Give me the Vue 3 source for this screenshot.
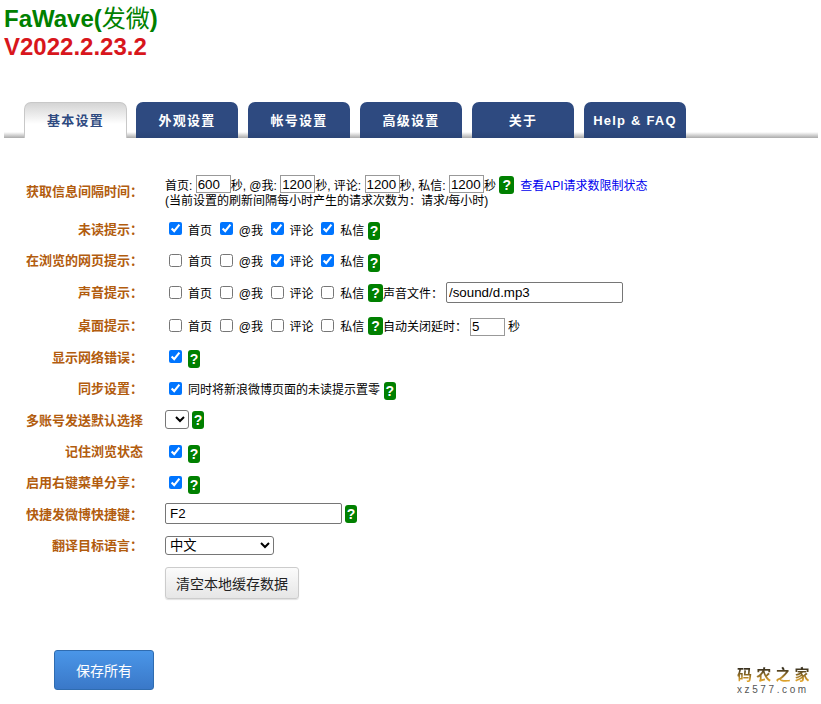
<script setup>
const tabs = ['基本设置', '外观设置', '帐号设置', '高级设置', '关于', 'Help & FAQ'];

const unread = [
  { name: '首页', on: true },
  { name: '@我', on: true },
  { name: '评论', on: true },
  { name: '私信', on: true }
];
const browsing = [
  { name: '首页', on: false },
  { name: '@我', on: false },
  { name: '评论', on: true },
  { name: '私信', on: true }
];
const none = [
  { name: '首页', on: false },
  { name: '@我', on: false },
  { name: '评论', on: false },
  { name: '私信', on: false }
];
</script>

<template>
  <main class="page">
    <h2 class="title">FaWave(<span class="thin">发微</span>)</h2>
    <h2 class="version">V2022.2.23.2</h2>

    <nav class="tabs">
      <a v-for="(tab, i) in tabs" :key="tab" :class="['tab', { active: i === 0 }]">{{ tab }}</a>
    </nav>

    <form class="settings" @submit.prevent>
      <div class="row first">
        <label class="name">获取信息间隔时间：</label>
        <div class="first-cell">
          <div class="line">首页: <input class="num" value="600" />秒, @我: <input class="num" value="1200" />秒, 评论: <input class="num" value="1200" />秒, 私信: <input class="num" value="1200" />秒 <span class="help wide">?</span><a class="api">查看API请求数限制状态</a></div>
          <div class="note">(当前设置的刷新间隔每小时产生的请求次数为：请求/每小时)</div>
        </div>
      </div>

      <div class="row">
        <label class="name">未读提示：</label>
        <div class="cell">
          <label v-for="c in unread" :key="c.name" class="check"><input type="checkbox" :checked="c.on" />{{ c.name }}</label>
          <span class="help">?</span>
        </div>
      </div>

      <div class="row">
        <label class="name">在浏览的网页提示：</label>
        <div class="cell">
          <label v-for="c in browsing" :key="c.name" class="check"><input type="checkbox" :checked="c.on" />{{ c.name }}</label>
          <span class="help">?</span>
        </div>
      </div>

      <div class="row tall">
        <label class="name">声音提示：</label>
        <div class="cell">
          <label v-for="c in none" :key="c.name" class="check"><input type="checkbox" :checked="c.on" />{{ c.name }}</label>
          <span class="help wide">?</span>
          <span class="extra">声音文件：</span>
          <input class="text sound" value="/sound/d.mp3" />
        </div>
      </div>

      <div class="row">
        <label class="name">桌面提示：</label>
        <div class="cell">
          <label v-for="c in none" :key="c.name" class="check"><input type="checkbox" :checked="c.on" />{{ c.name }}</label>
          <span class="help wide">?</span>
          <span class="extra">自动关闭延时：</span>
          <input class="num delay" value="5" />
          <span class="sec">秒</span>
        </div>
      </div>

      <div class="row">
        <label class="name">显示网络错误：</label>
        <div class="cell">
          <input class="solo" type="checkbox" checked />
          <span class="help">?</span>
        </div>
      </div>

      <div class="row">
        <label class="name">同步设置：</label>
        <div class="cell">
          <label class="check"><input type="checkbox" checked />同时将新浪微博页面的未读提示置零</label>
          <span class="help">?</span>
        </div>
      </div>

      <div class="row">
        <label class="name">多账号发送默认选择</label>
        <div class="cell">
          <select class="select empty"></select>
          <span class="help after-select">?</span>
        </div>
      </div>

      <div class="row">
        <label class="name">记住浏览状态</label>
        <div class="cell">
          <input class="solo" type="checkbox" checked />
          <span class="help">?</span>
        </div>
      </div>

      <div class="row">
        <label class="name">启用右键菜单分享：</label>
        <div class="cell">
          <input class="solo" type="checkbox" checked />
          <span class="help">?</span>
        </div>
      </div>

      <div class="row">
        <label class="name">快捷发微博快捷键：</label>
        <div class="cell">
          <input class="text shortcut" value="F2" />
          <span class="help after-input">?</span>
        </div>
      </div>

      <div class="row">
        <label class="name">翻译目标语言：</label>
        <div class="cell">
          <select class="select lang"><option>中文</option></select>
        </div>
      </div>

      <div class="row clear-row">
        <span class="name"></span>
        <div class="cell">
          <button type="button" class="clear">清空本地缓存数据</button>
        </div>
      </div>

      <button type="button" class="save">保存所有</button>
    </form>

    <div class="mark">
      <div class="mark-name">码农之家</div>
      <div class="mark-url">xz577.com</div>
    </div>
  </main>
</template>

<style scoped>
.page {
  position: relative;
  height: 704px;
  overflow: hidden;
  color: #000;
  background: #fff;
  font: 12px/15px "Liberation Sans", "Noto Sans CJK SC", sans-serif;
}

.title,
.version {
  margin: 0;
  padding-left: 4px;
  font-size: 24px;
  line-height: 29px;
  font-weight: bold;
}

.title {
  padding-top: 4px;
  color: #008000;
}

.thin {
  font-weight: normal;
}

.version {
  height: 28px;
  line-height: 27px;
  color: #d8161c;
}

.tabs {
  display: flex;
  gap: 10px;
  height: 36px;
  margin: 41px 3px 0 4px;
  padding-left: 20px;
  background: linear-gradient(to bottom, #fff 0, #fff 30px, #aaa 36px);
}

.tab {
  width: 102px;
  border-radius: 7px 7px 0 0;
  background: linear-gradient(to bottom, #2e4a80 80%, #2a4476 100%);
  color: #fff;
  font-size: 13px;
  line-height: 37px;
  font-weight: bold;
  letter-spacing: 1.2px;
  text-align: center;
}

.tab.active {
  box-sizing: border-box;
  width: 103px;
  margin-right: -1px;
  border: 1px solid #c8c8c8;
  border-bottom: 0;
  background: linear-gradient(to bottom, #d4d4d4, #fff 60%);
  color: #2e4a80;
  line-height: 36px;
}

.settings {
  padding-top: 37px;
}

.row {
  display: flex;
  align-items: center;
  height: 31.4px;
}

.row.tall {
  margin: 1px 0 1.6px;
}

.row.first {
  height: 38px;
  align-items: flex-start;
}

.row.clear-row {
  height: 44px;
}

.name {
  flex: none;
  width: 143px;
  margin-right: 22px;
  padding-top: 1px;
  color: #b25c0e;
  font-size: 13px;
  font-weight: bold;
  text-align: right;
}

.first .name {
  padding-top: 9px;
}

.line {
  white-space: nowrap;
  height: 18px;
  line-height: 23px;
}

.note {
  margin-top: 1px;
  line-height: 15px;
}

.cell {
  display: flex;
  align-items: center;
  white-space: nowrap;
}

.check {
  display: flex;
  align-items: center;
  margin-right: 3.7px;
  padding-top: 5px;
}

.check input {
  width: 13px;
  height: 13px;
  margin: 0 6px 5px 4px;
}

.solo {
  width: 13px;
  height: 13px;
  margin: 0 6px 0 4px;
}

.help {
  display: inline-block;
  flex: none;
  width: 12px;
  height: 18px;
  border-radius: 3px;
  background: #008000;
  color: #fff;
  font-size: 14px;
  line-height: 18px;
  font-weight: bold;
  text-align: center;
  vertical-align: top;
}

.help.wide {
  width: 15px;
}

.line .help {
  margin-top: 1px;
}

.cell .help {
  margin-top: 5px;
}

.cell .help.wide {
  margin-top: 1px;
}

.after-select {
  margin-left: 3px;
  margin-top: 1px !important;
}

.after-input {
  margin-left: 3px;
  margin-top: 0 !important;
}

.num {
  box-sizing: border-box;
  width: 35px;
  height: 18px;
  padding: 0 1px;
  border: 1px solid #999;
  border-radius: 0;
  outline: none;
  font: 13.33px "Liberation Sans", sans-serif;
  vertical-align: top;
}

.api {
  margin-left: 6px;
  color: #00e;
}

.extra {
  margin-top: 5px;
}

.text {
  box-sizing: border-box;
  height: 21px;
  padding: 1px 2px;
  border: 1px solid #767676;
  border-radius: 2px;
  font: 13.33px "Liberation Sans", sans-serif;
}

.sound {
  width: 177px;
  margin-left: 3px;
  margin-top: 1px;
}

.delay {
  margin-left: 3px;
  margin-top: 3px;
}

.sec {
  margin-left: 3px;
  margin-top: 5px;
}

.shortcut {
  width: 177px;
  padding-left: 4px;
}

.select {
  box-sizing: border-box;
  height: 19px;
  border: 1px solid #767676;
  border-radius: 3px;
  background: #fff;
  font: 13.33px "Liberation Sans", "Noto Sans CJK SC", sans-serif;
}

.select.empty {
  width: 24px;
}

.select.lang {
  width: 109px;
}

.clear {
  box-sizing: border-box;
  width: 134px;
  height: 32px;
  border: 1px solid #ccc;
  border-radius: 3px;
  background: linear-gradient(to bottom, #fbfbfb, #e6e6e6);
  box-shadow: 0 1px 1px rgba(0, 0, 0, 0.12);
  color: #222;
  font: 14px "Liberation Sans", "Noto Sans CJK SC", sans-serif;
}

.save {
  display: block;
  box-sizing: border-box;
  width: 100px;
  height: 40px;
  margin: 45px 0 0 54px;
  border: 1px solid #2f6cb0;
  border-radius: 3px;
  background: linear-gradient(to bottom, #4a96e8, #3a78c8);
  color: #fff;
  font: 14px "Liberation Sans", "Noto Sans CJK SC", sans-serif;
}

.mark {
  position: absolute;
  left: 737px;
  top: 665px;
  width: 84px;
}

.mark-name {
  background: linear-gradient(to bottom, #3a3220 20%, #e3a62c 85%);
  -webkit-background-clip: text;
  background-clip: text;
  color: transparent;
  font-size: 15px;
  line-height: 19px;
  font-weight: bold;
  letter-spacing: 4.2px;
}

.mark-url {
  color: #555;
  font-size: 10px;
  line-height: 12px;
  letter-spacing: 2.6px;
}
</style>
